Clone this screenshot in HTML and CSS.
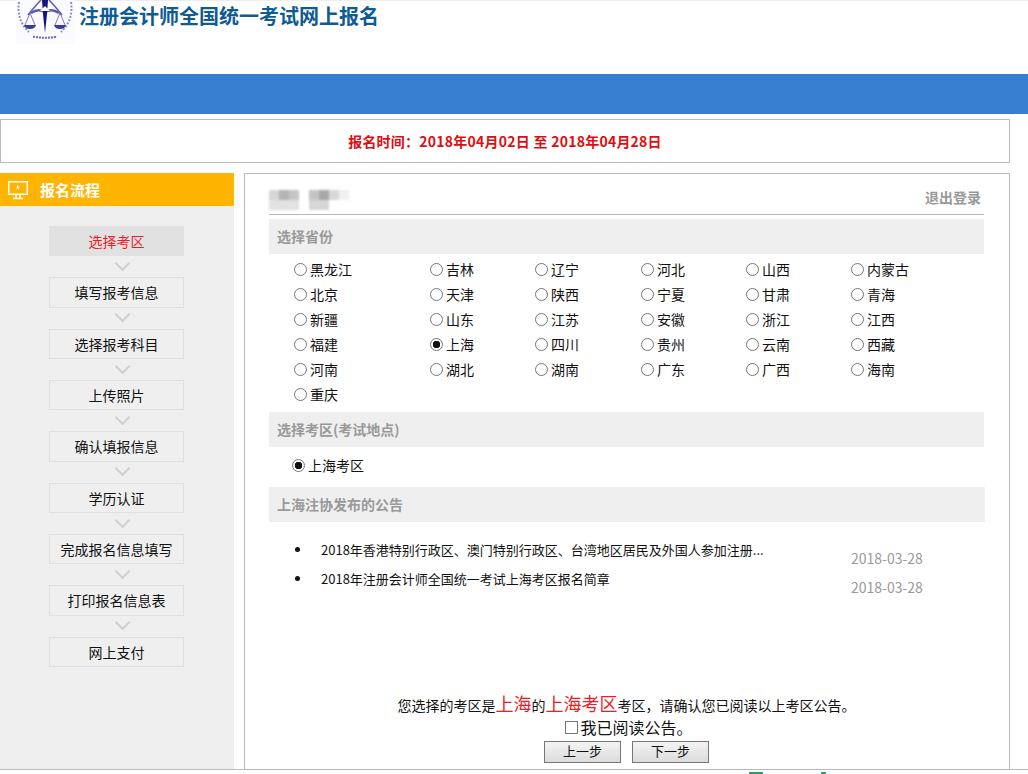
FILE: index.html
```html
<!DOCTYPE html>
<html lang="zh-CN">
<head>
<meta charset="utf-8">
<title>注册会计师全国统一考试网上报名</title>
<link rel="stylesheet" href="styles.css">
</head>
<body>
<header class="top">
  <svg class="logo" viewBox="0 0 59 44" width="59" height="44" aria-hidden="true">
    <rect width="59" height="44" fill="#fafaff"/>
    <path d="M3 2C1 14 5 25 13 32" fill="none" stroke="#8f8fc4" stroke-width="2" stroke-dasharray="2 1.5"/>
    <path d="M55 2C57 14 53 25 45 32" fill="none" stroke="#8f8fc4" stroke-width="2" stroke-dasharray="2 1.5"/>
    <path d="M17 36.500Q29 39 41 36.500" fill="none" stroke="#6a6aa8" stroke-width="2" stroke-dasharray="2 1"/>
    <path d="M12 15Q20 5 25 0M46 15Q38 5 33 0" fill="none" stroke="#5c5cb0" stroke-width="1.500"/>
    <path d="M15 13Q22 8 29 12Q36 8 43 13" fill="none" stroke="#5c5cb0" stroke-width="2.500"/>
    <path d="M26 0L32 0L31 14L29 33L27 14Z" fill="#14147e"/>
    <path d="M24 11L34 11L29 6Z" fill="#fff"/>
    <path d="M14 13L9 25M14 13L19 25M44 13L39 25M44 13L49 25" stroke="#5c5cb0" stroke-width="0.800" fill="none"/>
    <path d="M8 25H20Q19 29 14 29Q9 29 8 25ZM38 25H50Q49 29 44 29Q39 29 38 25Z" fill="#3c3ca0"/>
  </svg>
  <h1 class="site-title">注册会计师全国统一考试网上报名</h1>
</header>
<div class="blue-bar"></div>
<div class="time-box">报名时间：2018年04月02日 至 2018年04月28日</div>
<main class="main">
  <aside class="side">
    <div class="side-head">
      <svg class="side-icon" viewBox="0 0 20 20" width="20" height="20" aria-hidden="true">
        <rect x="0.750" y="1.750" width="18.500" height="12.500" fill="none" stroke="#fff" stroke-width="1.500"/>
        <path d="M9 5l3 2.500-1.500.3.700 1.600-1 .4-.7-1.600L8.500 9.500z" fill="#fff"/>
        <path d="M8 14.500V18M12 14.500V18M5 18.500H15" stroke="#fff" stroke-width="1.500" fill="none"/>
      </svg>
      <span>报名流程</span>
    </div>
    <ol class="steps">
      <li class="step step-active">选择考区</li>
      <li class="step">填写报考信息</li>
      <li class="step">选择报考科目</li>
      <li class="step">上传照片</li>
      <li class="step">确认填报信息</li>
      <li class="step">学历认证</li>
      <li class="step">完成报名信息填写</li>
      <li class="step">打印报名信息表</li>
      <li class="step">网上支付</li>
    </ol>
  </aside>
  <section class="panel">
    <div class="user-row">
      <div class="blurred" aria-hidden="true"></div>
      <a class="logout">退出登录</a>
    </div>
    <h2 class="sec-head">选择省份</h2>
    <div class="prov-grid">
      <label class="opt"><input type="radio" name="p">黑龙江</label>
      <label class="opt"><input type="radio" name="p">吉林</label>
      <label class="opt"><input type="radio" name="p">辽宁</label>
      <label class="opt"><input type="radio" name="p">河北</label>
      <label class="opt"><input type="radio" name="p">山西</label>
      <label class="opt"><input type="radio" name="p">内蒙古</label>
      <label class="opt"><input type="radio" name="p">北京</label>
      <label class="opt"><input type="radio" name="p">天津</label>
      <label class="opt"><input type="radio" name="p">陕西</label>
      <label class="opt"><input type="radio" name="p">宁夏</label>
      <label class="opt"><input type="radio" name="p">甘肃</label>
      <label class="opt"><input type="radio" name="p">青海</label>
      <label class="opt"><input type="radio" name="p">新疆</label>
      <label class="opt"><input type="radio" name="p">山东</label>
      <label class="opt"><input type="radio" name="p">江苏</label>
      <label class="opt"><input type="radio" name="p">安徽</label>
      <label class="opt"><input type="radio" name="p">浙江</label>
      <label class="opt"><input type="radio" name="p">江西</label>
      <label class="opt"><input type="radio" name="p">福建</label>
      <label class="opt"><input type="radio" name="p" checked>上海</label>
      <label class="opt"><input type="radio" name="p">四川</label>
      <label class="opt"><input type="radio" name="p">贵州</label>
      <label class="opt"><input type="radio" name="p">云南</label>
      <label class="opt"><input type="radio" name="p">西藏</label>
      <label class="opt"><input type="radio" name="p">河南</label>
      <label class="opt"><input type="radio" name="p">湖北</label>
      <label class="opt"><input type="radio" name="p">湖南</label>
      <label class="opt"><input type="radio" name="p">广东</label>
      <label class="opt"><input type="radio" name="p">广西</label>
      <label class="opt"><input type="radio" name="p">海南</label>
      <label class="opt"><input type="radio" name="p">重庆</label>
    </div>
    <h2 class="sec-head">选择考区(考试地点)</h2>
    <div class="area-row"><label class="opt"><input type="radio" name="a" checked>上海考区</label></div>
    <h2 class="sec-head sec-wide">上海注协发布的公告</h2>
    <ul class="notices">
      <li class="notice"><span class="notice-title">2018年香港特别行政区、澳门特别行政区、台湾地区居民及外国人参加注册...</span><span class="notice-date">2018-03-28</span></li>
      <li class="notice"><span class="notice-title">2018年注册会计师全国统一考试上海考区报名简章</span><span class="notice-date">2018-03-28</span></li>
    </ul>
    <div class="confirm">
      <p class="confirm-line">您选择的考区是<em class="hl">上海</em>的<em class="hl">上海考区</em>考区，请确认您已阅读以上考区公告。</p>
      <label class="read"><input type="checkbox">我已阅读公告。</label>
      <div class="btns"><button class="btn" type="button">上一步</button><button class="btn" type="button">下一步</button></div>
    </div>
  </section>
</main>
<footer class="foot"><i class="f1"></i><i class="f2"></i></footer>
</body>
</html>
```
FILE: styles.css
```css
* { box-sizing: border-box; }
html, body { margin: 0; padding: 0; height: 774px; overflow: hidden; }
body {
  display: flex;
  flex-direction: column;
  background: #fff;
  color: #111;
  font-family: "Noto Sans CJK SC", "Liberation Sans", sans-serif;
  font-size: 14px;
}
.top {
  height: 74px;
  flex: none;
  display: flex;
  align-items: flex-start;
  gap: 4px;
  padding-left: 16px;
  border-top: 1px solid #eee;
}
.logo { display: block; margin-top: -1px; }
.site-title {
  margin: 0;
  font-size: 20px;
  font-weight: 700;
  line-height: 30px;
  color: #0f5b92;
}
.blue-bar { height: 40px; flex: none; background: #377dd0; }
.time-box {
  flex: none;
  width: 1010px;
  height: 44px;
  margin-top: 5px;
  border: 1px solid #bbb;
  text-align: center;
  line-height: 42px;
  font-weight: 700;
  letter-spacing: 0.240px;
  color: #e00c12;
}
.main {
  flex: 1;
  min-height: 0;
  display: flex;
  gap: 10px;
  width: 1010px;
  margin-top: 10px;
}
.side { width: 234px; flex: none; background: #efefef; }
.side-head {
  height: 33px;
  display: flex;
  align-items: center;
  gap: 12px;
  padding-left: 8px;
  background: #ffb400;
  color: #fff;
  font-size: 15px;
  font-weight: 700;
}
.side-icon { display: block; }
.steps {
  list-style: none;
  margin: 20px 0 0 49px;
  padding: 0;
  width: 135px;
}
.step {
  position: relative;
  height: 30.350px;
  margin-bottom: 21px;
  border: 1px solid #e0e0e0;
  text-align: center;
  line-height: 28px;
}
.step:not(:last-child)::after {
  content: "";
  position: absolute;
  left: 67px;
  top: 31px;
  width: 9px;
  height: 9px;
  border: solid #cfcfd4;
  border-width: 0 2px 2px 0;
  transform: rotate(45deg);
}
.step-active { background: #e1e1e1; border-color: #e1e1e1; color: #ee1c25; }
.panel {
  flex: 1;
  min-width: 0;
  display: flex;
  flex-direction: column;
  padding: 0 25px 6px 24px;
  border: 1px solid #bbb;
  border-bottom: 0;
}
.user-row {
  flex: none;
  height: 41px;
  display: flex;
  justify-content: space-between;
  align-items: flex-start;
  padding: 12px 3px 0 0;
  border-bottom: 1px solid #bbb;
}
.blurred {
  width: 80px;
  height: 20px;
  margin-top: 4px;
  filter: blur(1px);
  background:
    linear-gradient(90deg, #d6d6d6 0 10px, #b4b4b4 10px 20px, #c6c6c6 20px 30px, #fff 30px 40px, #c4c4c4 40px 50px, #a8a8a8 50px 60px, #d8d8d8 60px 70px, #f0f0f0 70px 80px) top / 100% 10px no-repeat,
    linear-gradient(90deg, #e2e2e2 0 30px, #fff 30px 40px, #d6d6d6 40px 60px, #fff 60px) bottom / 100% 10px no-repeat;
}
.logout { font-weight: 700; color: #999; line-height: 22px; }
.sec-head {
  flex: none;
  height: 35px;
  margin: 0;
  padding-left: 8px;
  background: #efefef;
  color: #999;
  font-size: 14px;
  font-weight: 700;
  line-height: 35px;
}
.user-row + .sec-head { margin-top: 4px; }
.sec-wide { margin-right: -1px; }
.prov-grid {
  flex: none;
  display: grid;
  grid-template-columns: 136px 105px 106px 105px 105px 1fr;
  grid-auto-rows: 25px;
  height: 158px;
  padding: 3px 0 0 25px;
}
.opt { display: flex; align-items: center; gap: 3px; white-space: nowrap; line-height: 25px; }
input[type="radio"] {
  appearance: none;
  flex: none;
  width: 13px;
  height: 13px;
  margin: 0;
  border: 1px solid #767676;
  border-radius: 50%;
  background: #fff;
}
input[type="radio"]:checked { background: radial-gradient(circle, #111 0 3.500px, #fff 4px); }
.area-row { flex: none; height: 40px; padding: 6px 0 0 23px; }
.notices { flex: none; list-style: none; margin: 0; padding: 14px 0 0 52px; }
.notice {
  position: relative;
  display: flex;
  height: 28.500px;
  font-size: 13px;
}
.notice::before {
  content: "";
  position: absolute;
  left: -26px;
  top: 11px;
  width: 5px;
  height: 5px;
  border-radius: 50%;
  background: #111;
}
.notice-title { width: 530px; line-height: 28px; }
.notice-date { padding-top: 8px; line-height: 28px; font-size: 14px; color: #999; }
.confirm { margin-top: auto; text-align: center; }
.confirm-line { margin: 0; height: 24px; line-height: 22px; font-size: 14px; }
.hl { font-style: normal; font-size: 18px; color: #ee1c25; }
.read {
  display: flex;
  justify-content: center;
  align-items: center;
  gap: 2px;
  height: 22px;
  padding-left: 5px;
  line-height: 20px;
  font-size: 16px;
}
input[type="checkbox"] {
  appearance: none;
  width: 13px;
  height: 13px;
  margin: 0;
  border: 1px solid #767676;
  background: #fff;
}
.btns { display: flex; justify-content: center; gap: 11px; margin-top: 3px; }
.btn {
  width: 77px;
  height: 22px;
  padding: 0 0 3px;
  border: 1px solid #777;
  background: linear-gradient(#f4f4f4, #dcdcdc);
  color: #111;
  font: inherit;
  font-size: 13px;
  line-height: 16px;
}
.foot { flex: none; position: relative; height: 5px; border-top: 1px solid #bbb; }
.foot i { position: absolute; top: 2px; height: 3px; background: #2f9e6e; }
.foot .f1 { left: 749px; width: 14px; }
.foot .f2 { left: 821px; width: 5px; }
```
